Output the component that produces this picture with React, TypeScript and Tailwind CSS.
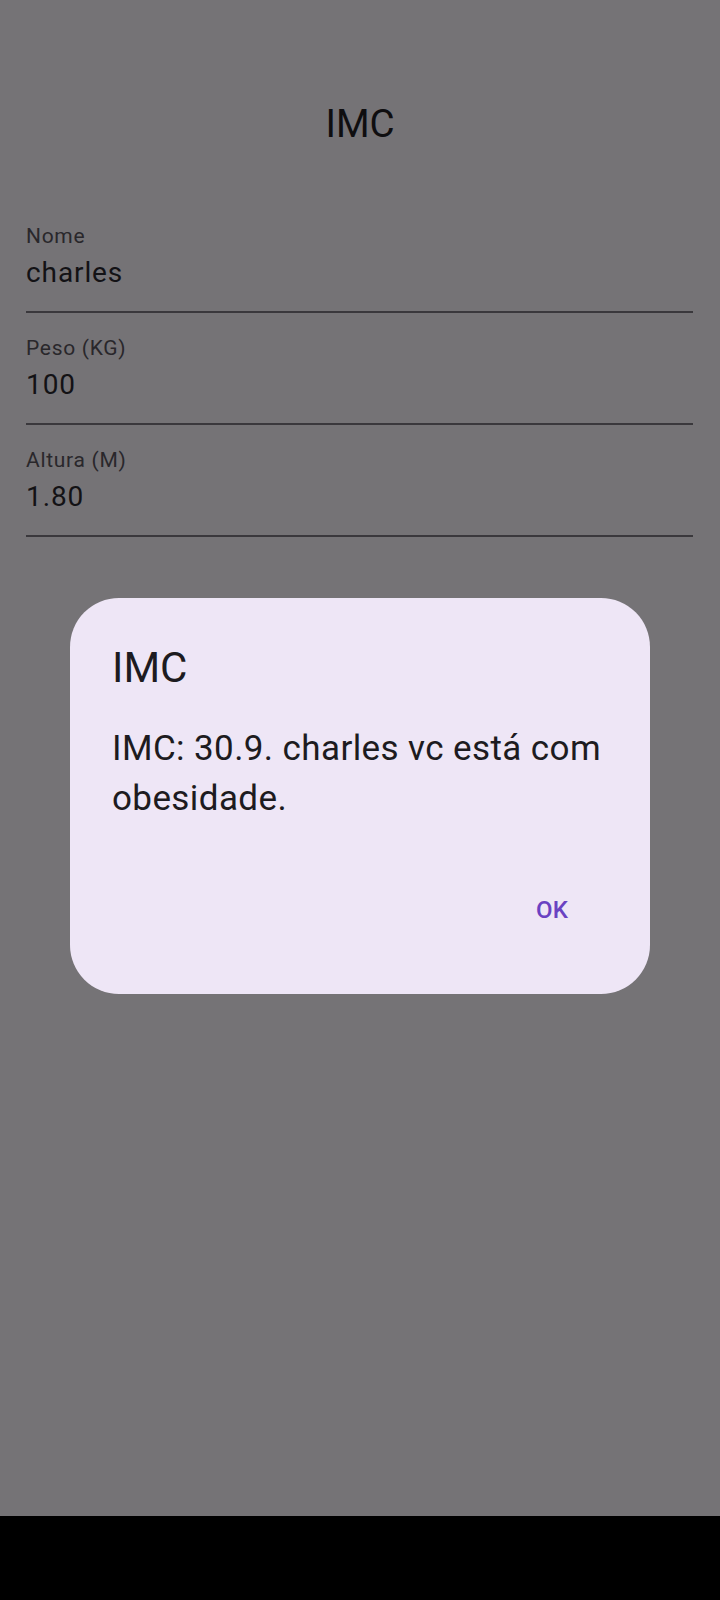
import React from "react";

const fields = [
  { label: "Nome", value: "charles" },
  { label: "Peso (KG)", value: "100" },
  { label: "Altura (M)", value: "1.80" },
];

export default function App() {
  return (
    <div className="w-[720px] h-[1600px] flex flex-col bg-black font-['Roboto',sans-serif]">
      {/* SCRIM + PAGE */}
      <div className="h-[1516px] bg-[#757376] flex flex-col">
        <header className="pt-[100px] flex justify-center">
          <h1 className="text-[38.5px] leading-[48px] text-[#0f0e10]">IMC</h1>
        </header>

        <div className="mt-[53px] pl-[26px] pr-[27px] flex flex-col">
          {fields.map((f) => (
            <div
              key={f.label}
              className="pt-[23px] pb-[20px] border-b-2 border-[#3a383c] flex flex-col"
            >
              <span className="text-[21px] leading-[24px] tracking-[0.7px] text-[#29272b]">
                {f.label}
              </span>
              <span className="mt-[7px] text-[28px] leading-[36px] tracking-[0.9px] text-[#131215]">
                {f.value}
              </span>
            </div>
          ))}
        </div>

        {/* DIALOG */}
        <div className="mt-[61px] mx-[70px] rounded-[49px] bg-[#eee6f6] px-[42px] pt-[42px] pb-[49px] flex flex-col">
          <h2 className="text-[42px] leading-[56px] text-[#1d1b20]">IMC</h2>
          <p className="mt-[28px] text-[35px] leading-[50px] tracking-[0.4px] text-[#1d1b20]">
            IMC: 30.9. charles vc está com obesidade.
          </p>
          <div className="mt-[51px] flex justify-end pr-[19px]">
            <button className="h-[70px] px-[21px] flex items-center text-[24px] leading-[34px] font-medium tracking-[0.2px] text-[#6a42c2]">
              OK
            </button>
          </div>
        </div>
      </div>
    </div>
  );
}
